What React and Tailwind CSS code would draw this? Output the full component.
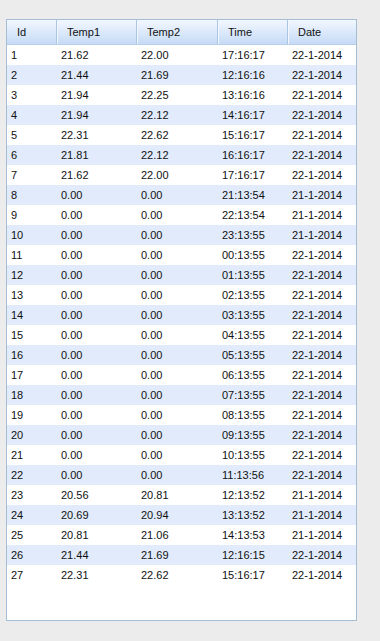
const rows = [
  ["1", "21.62", "22.00", "17:16:17", "22-1-2014"],
  ["2", "21.44", "21.69", "12:16:16", "22-1-2014"],
  ["3", "21.94", "22.25", "13:16:16", "22-1-2014"],
  ["4", "21.94", "22.12", "14:16:17", "22-1-2014"],
  ["5", "22.31", "22.62", "15:16:17", "22-1-2014"],
  ["6", "21.81", "22.12", "16:16:17", "22-1-2014"],
  ["7", "21.62", "22.00", "17:16:17", "22-1-2014"],
  ["8", "0.00", "0.00", "21:13:54", "21-1-2014"],
  ["9", "0.00", "0.00", "22:13:54", "21-1-2014"],
  ["10", "0.00", "0.00", "23:13:55", "21-1-2014"],
  ["11", "0.00", "0.00", "00:13:55", "22-1-2014"],
  ["12", "0.00", "0.00", "01:13:55", "22-1-2014"],
  ["13", "0.00", "0.00", "02:13:55", "22-1-2014"],
  ["14", "0.00", "0.00", "03:13:55", "22-1-2014"],
  ["15", "0.00", "0.00", "04:13:55", "22-1-2014"],
  ["16", "0.00", "0.00", "05:13:55", "22-1-2014"],
  ["17", "0.00", "0.00", "06:13:55", "22-1-2014"],
  ["18", "0.00", "0.00", "07:13:55", "22-1-2014"],
  ["19", "0.00", "0.00", "08:13:55", "22-1-2014"],
  ["20", "0.00", "0.00", "09:13:55", "22-1-2014"],
  ["21", "0.00", "0.00", "10:13:55", "22-1-2014"],
  ["22", "0.00", "0.00", "11:13:56", "22-1-2014"],
  ["23", "20.56", "20.81", "12:13:52", "21-1-2014"],
  ["24", "20.69", "20.94", "13:13:52", "21-1-2014"],
  ["25", "20.81", "21.06", "14:13:53", "21-1-2014"],
  ["26", "21.44", "21.69", "12:16:15", "22-1-2014"],
  ["27", "22.31", "22.62", "15:16:17", "22-1-2014"],
]

const headers = ["Id", "Temp1", "Temp2", "Time", "Date"]
const cols = "grid grid-cols-[50px_80px_81px_70px_68px]"

export default function App() {
  return (
    <div className="w-[380px] h-[641px] bg-[#ececec] pt-[19px] pl-[6px] font-['Liberation_Sans',sans-serif] text-[11px] text-[#111]">
      <div className="w-[351px] h-[602px] border border-[#a6bdd6] bg-white">
        {/* header */}
        <div className={`${cols} h-[25px] border-b border-[#b7cfe9] bg-gradient-to-b from-[#f2f7ff] to-[#c6dbf6]`}>
          {headers.map((h, i) => (
            <div
              key={h}
              className={`flex items-center pl-[10px] ${i < 4 ? "border-r border-[#a9c5e4] shadow-[1px_0_0_#f4f8fe]" : ""}`}
            >
              {h}
            </div>
          ))}
        </div>
        {/* rows */}
        {rows.map((r, idx) => (
          <div key={r[0]} className={`${cols} h-[20px] ${idx % 2 ? "bg-[#e1ebfb]" : "bg-white"}`}>
            {r.map((c, j) => (
              <div key={j} className="flex items-center pl-[4px]">
                {c}
              </div>
            ))}
          </div>
        ))}
      </div>
    </div>
  )
}
